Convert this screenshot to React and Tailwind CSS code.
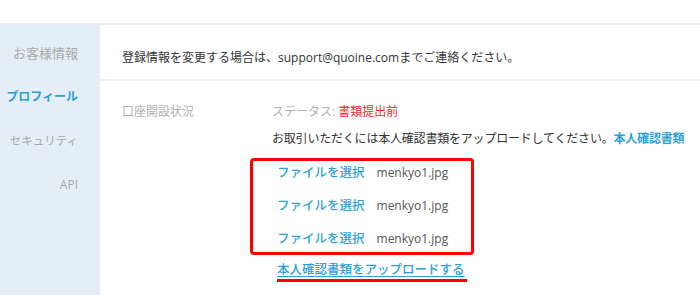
const FONT = { fontFamily: '"Open Sans", "Noto Sans CJK JP", sans-serif' };

const NAV = [
  { label: 'お客様情報', active: false, size: 'text-[13px]' },
  { label: 'プロフィール', active: true, size: 'text-[12px]' },
  { label: 'セキュリティ', active: false, size: 'text-[11.5px]' },
  { label: 'API', active: false, size: 'text-[12px]' },
];

const FILES = ['menkyo1.jpg', 'menkyo1.jpg', 'menkyo1.jpg'];

export default function App() {
  return (
    <div className="w-[700px] h-[295px] overflow-hidden bg-white" style={FONT}>
      <div className="h-[23px] bg-white" />
      <div className="flex h-[272px] border-t-2 border-[#e3ecf0]">
        {/* sidebar */}
        <aside className="w-[100px] shrink-0 bg-[#e6eef5] pt-[6px] pr-[22px]">
          {NAV.map((item) => (
            <div
              key={item.label}
              className={`h-[44px] leading-[44px] text-right ${item.size} ${
                item.active ? 'text-[#2a9fd8] font-semibold' : 'text-[#a9a9a9]'
              }`}
            >
              {item.label}
            </div>
          ))}
        </aside>

        {/* main */}
        <main className="flex-1 min-w-0">
          <div className="h-[56px] pt-[23px] pl-[22px] leading-[20px] border-b-2 border-[#eef1f3] text-[12px] text-[#333] whitespace-nowrap">
            登録情報を変更する場合は、support@quoine.comまでご連絡ください。
          </div>

          <div className="flex pl-[22px] pt-[21px] text-[12px] whitespace-nowrap">
            <div className="w-[150px] shrink-0 leading-[20px] text-[#b0b0b0]">口座開設状況</div>
            <div className="flex-1">
              <div className="leading-[20px]">
                <span className="text-[#b0b0b0]">ステータス: </span>
                <span className="text-[#f0282d]">書類提出前</span>
              </div>
              <div className="leading-[20px] mt-[7px] text-[#333] tracking-[-0.2px]">
                お取引いただくには本人確認書類をアップロードしてください。
                <span className="text-[#2a9fd8] font-semibold">本人確認書類</span>
              </div>

              <div className="ml-[-22px] mt-[9px] w-[224px] border-[3px] border-[#ff0000] rounded-[4px] pl-[24px] pb-[1px] flex flex-col gap-[9px]">
                {FILES.map((f, i) => (
                  <div key={i} className="h-[24px] flex items-center gap-[12px]">
                    <span className="text-[12.5px] text-[#2a9fd8] font-medium">ファイルを選択</span>
                    <span className="text-[12px] text-[#555]">{f}</span>
                  </div>
                ))}
              </div>

              <div className="mt-[6px] ml-[5px]">
                <span className="inline-block text-[12.5px] leading-[18px] text-[#2a9fd8] font-medium underline underline-offset-2 border-b-[3px] border-[#ff0000] pr-[2px]">
                  本人確認書類をアップロードする
                </span>
              </div>
            </div>
          </div>
        </main>
      </div>
    </div>
  );
}
